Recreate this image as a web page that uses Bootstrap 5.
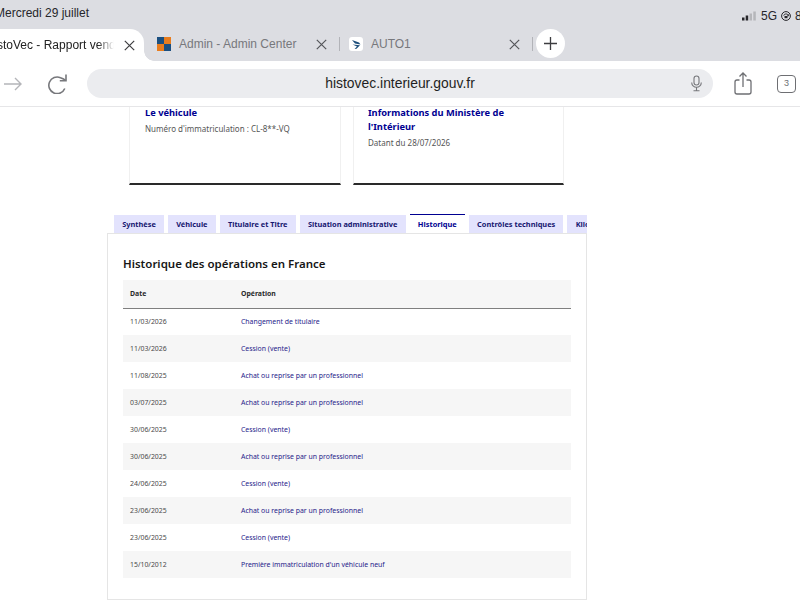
<!DOCTYPE html>
<html lang="fr">
<head>
  <meta charset="UTF-8">
  <meta name="viewport" content="width=device-width, initial-scale=1.0">
  <title>HistoVec</title>
  <link rel="stylesheet" href="https://cdn.jsdelivr.net/npm/bootstrap@5.3.0/dist/css/bootstrap.min.css">
  <style>
    html, body { width: 800px; height: 600px; overflow: hidden; }
    body { font-family: "Noto Sans", "Open Sans", sans-serif; background: #fff; color: #3a3a3a; }

    /* browser chrome */
    .chrome { background: #dcdde2; font-family: "Liberation Sans", Arial, sans-serif; }
    .status-bar { height: 27px; padding: 5px 0 0 0; font-size: 12px; line-height: 16px; color: #26262a; }
    .status-date { margin-left: -5px; }
    .status-right { width: 58px; gap: 4px; font-size: 12px; white-space: nowrap; flex: none; }
    .status-right svg { flex: none; }
    .tab-strip { height: 34px; overflow: hidden; }
    .tab-on { width: 144px; height: 32px; margin-top: 2px; flex: none; background: #fff; border-radius: 0 14px 0 0; font-size: 12px; color: #222; padding-right: 9px; position: relative; }
    .tab-on::after { content: ""; position: absolute; left: 100%; bottom: 0; width: 10px; height: 10px; background: radial-gradient(circle at 100% 0, transparent 9.5px, #fff 10px); }
    .tab-on .tab-label { width: 117px; margin-left: -3px; white-space: nowrap; overflow: hidden; -webkit-mask-image: linear-gradient(90deg, #000 86%, transparent); mask-image: linear-gradient(90deg, #000 86%, transparent); }
    .tab-off { height: 32px; font-size: 12px; color: #77787c; flex: none; }
    .tab-one { width: 195px; padding: 0 12px 0 13px; }
    .tab-two { width: 192px; padding: 0 12px 0 9px; }
    .tab-sep { width: 1px; height: 14px; background: #b2b3b8; flex: none; }
    .plus-btn { width: 29px; height: 29px; border-radius: 50%; background: #fff; flex: none; margin-left: 3px; margin-top: -2px; }
    .toolbar { height: 46px; background: #fff; border-bottom: 1px solid #e6e6e8; }
    .back-arrow { margin: 0 26px 0 4px; flex: none; }
    .url-field { width: 626px; height: 29px; margin: 0 21px 0 20px; border-radius: 15px; background: #ebecef; font-size: 13.9px; color: #1f1f22; flex: none; position: relative; }
    .mic-icon { position: absolute; right: 11px; top: 6px; }
    .tabs-count { width: 19px; height: 18px; margin-left: 25px; border: 1.3px solid #6e6f73; border-radius: 4px; font-size: 9px; color: #6e6f73; flex: none; }

    /* page */
    .cards-row { padding-left: 129px; gap: 12px; height: 78px; }
    .veh-card { width: 212px; height: 78px; border: 1px solid #f0f0f0; border-top: 0; border-bottom: 2px solid #2a2a2a; padding-left: 15px; flex: none; }
    .veh-card + .veh-card { width: 211px; padding: 0 30px 0 14px; }
    .veh-title { font-size: 9.3px; line-height: 14px; font-weight: 700; color: #000091; margin: -1px 0 2px; }
    .veh-sub { font-size: 8px; line-height: 14px; color: #555; margin: 0; }
    .tab-row { margin: 29px 0 0 114px; width: 473px; height: 19px; gap: 4px; overflow: hidden; }
    .hv-tab { height: 18px; margin-top: 1px; padding: 0 8.2px; background: #e3e3fd; color: #161670; font-size: 7.4px; line-height: 18px; font-weight: 700; white-space: nowrap; flex: none; }
    .hv-tab-on { height: 19px; margin-top: 0; background: #fff; border-top: 1px solid #000091; color: #000091; }
    .panel { width: 480px; height: 367px; margin-left: 107px; border: 1px solid #e5e5e5; padding: 21px 15px 0; }
    .panel h2 { font-size: 11.5px; line-height: 18px; font-weight: 600; color: #161616; margin: 0 0 7px; }
    .hv-table { width: 448px; table-layout: fixed; margin: 0; font-size: 6.9px; color: #4a4a4a; }
    .hv-table th, .hv-table td { height: 27px; padding: 1px 7px 0; vertical-align: middle; border: 0; background: transparent; }
    .hv-table thead th { height: 28px; background: #f6f6f6; border-bottom: 1px solid #7f7f7f; font-weight: 700; color: #2a2a2a; }
    .hv-table td:first-child, .hv-table th:first-child { width: 111px; }
    .hv-table tbody tr:nth-child(even) td { background: #f6f6f6; }
    .hv-table a { color: #26228a; text-decoration: none; }
  </style>
</head>
<body>
  <div class="chrome">
    <div class="status-bar d-flex justify-content-between">
      <span class="status-date">Mercredi 29 juillet</span>
      <span class="status-right d-flex align-items-center">
        <svg width="14" height="10" viewBox="0 0 14 10"><rect x="0" y="6.500" width="2.500" height="3" fill="#26262a"/><rect x="3.700" y="4.500" width="2.500" height="5" fill="#26262a"/><rect x="7.500" y="2.500" width="2.500" height="7" fill="#b5b6ba"/><rect x="11.300" y="0.500" width="2.500" height="9" fill="#b5b6ba"/></svg>
        <span style="margin-left:1px">5G</span>
        <svg width="10" height="10" viewBox="0 0 10 10" fill="none" stroke="#26262a"><circle cx="5" cy="5" r="4.400" stroke-width="1"/><path d="M2.700 4.700A2.400 2.400 0 0 1 7.300 4.500M7.700 3.200v1.600H6.100" stroke-width=".9"/><rect x="3.500" y="5" width="3" height="2.200" fill="#26262a" stroke="none"/></svg>
        <span>8</span>
      </span>
    </div>
    <div class="tab-strip d-flex align-items-center">
      <div class="tab-on d-flex align-items-center justify-content-between">
        <span class="tab-label">stoVec - Rapport vendeur</span>
        <svg width="11" height="11" viewBox="0 0 11 11" stroke="#3d3d40" stroke-width="1.200"><path d="M.8.8l9.4 9.4M10.200.8.8 10.200"/></svg>
      </div>
      <div class="tab-off tab-one d-flex align-items-center">
        <svg class="me-2" width="14" height="14" viewBox="0 0 14 14"><rect width="7" height="7" fill="#1b4f80"/><rect x="7" width="7" height="7" fill="#e87c1e"/><rect y="7" width="7" height="7" fill="#e87c1e"/><rect x="7" y="7" width="7" height="7" fill="#1b4f80"/></svg>
        <span class="flex-grow-1">Admin - Admin Center</span>
        <svg width="11" height="11" viewBox="0 0 11 11" stroke="#55565a" stroke-width="1.200"><path d="M.8.8l9.4 9.400M10.200.8.8 10.200"/></svg>
      </div>
      <span class="tab-sep"></span>
      <div class="tab-two tab-off d-flex align-items-center">
        <svg class="me-2" width="14" height="14" viewBox="0 0 14 14"><rect width="14" height="14" rx="3" fill="#fff"/><path d="M3 3l7 2.500 1.500 2L6 6.500zM3.500 7.500l7.500.800-3.500 3.500-2 .2 2.500-2.500z" fill="#1d4f7c"/></svg>
        <span class="flex-grow-1">AUTO1</span>
        <svg width="11" height="11" viewBox="0 0 11 11" stroke="#55565a" stroke-width="1.200"><path d="M.8.8l9.400 9.400M10.200.8.8 10.200"/></svg>
      </div>
      <span class="tab-sep"></span>
      <span class="plus-btn d-flex align-items-center justify-content-center">
        <svg width="13" height="13" viewBox="0 0 13 13" stroke="#3d3d40" stroke-width="1.300"><path d="M6.500 0v13M0 6.500h13"/></svg>
      </span>
    </div>
    <div class="toolbar d-flex align-items-center">
      <svg class="back-arrow" width="18" height="14" viewBox="0 0 18 14" fill="none" stroke="#b4b5b9" stroke-width="1.400"><path d="M0 7h17M11 1l6 6-6 6"/></svg>
      <svg width="19" height="20" viewBox="0 0 19 20" fill="none" stroke="#77787c" stroke-width="1.600"><path d="M16.800 14.500A8.300 8.300 0 1 1 12.500 3.700C14.500 4.400 16 5 17.800 6.500"/><path d="M18 .5V6.800H11.800"/></svg>
      <div class="url-field d-flex align-items-center justify-content-center">
        <span>histovec.interieur.gouv.fr</span>
        <svg class="mic-icon" width="11" height="17" viewBox="0 0 11 17" fill="none" stroke="#77787c" stroke-width="1.100"><rect x="3" y="1" width="5" height="9" rx="2.500"/><path d="M.7 7.500a4.800 4.800 0 0 0 9.600 0M5.500 12.500v3M2.500 15.800h6"/></svg>
      </div>
      <svg width="18" height="23" viewBox="0 0 18 23" fill="none" stroke="#6e6f73" stroke-width="1.300"><path d="M5.500 8H3a2 2 0 0 0-2 2v10a2 2 0 0 0 2 2h12a2 2 0 0 0 2-2V10a2 2 0 0 0-2-2h-2.500M9 15V1M5.500 4.500 9 1l3.500 3.500"/></svg>
      <span class="tabs-count d-flex align-items-center justify-content-center">3</span>
    </div>
  </div>

  <div class="cards-row d-flex">
    <div class="veh-card">
      <p class="veh-title">Le véhicule</p>
      <p class="veh-sub">Numéro d'immatriculation : CL-8**-VQ</p>
    </div>
    <div class="veh-card">
      <p class="veh-title">Informations du Ministère de l'Intérieur</p>
      <p class="veh-sub">Datant du 28/07/2026</p>
    </div>
  </div>

  <div class="tab-row d-flex">
    <span class="hv-tab">Synthèse</span>
    <span class="hv-tab">Véhicule</span>
    <span class="hv-tab">Titulaire et Titre</span>
    <span class="hv-tab">Situation administrative</span>
    <span class="hv-tab hv-tab-on">Historique</span>
    <span class="hv-tab">Contrôles techniques</span>
    <span class="hv-tab">Kilométrage</span>
  </div>

  <div class="panel">
    <h2>Historique des opérations en France</h2>
    <table class="table hv-table">
      <thead><tr><th>Date</th><th>Opération</th></tr></thead>
      <tbody>
        <tr><td>11/03/2026</td><td><a href="#">Changement de titulaire</a></td></tr>
        <tr><td>11/03/2026</td><td><a href="#">Cession (vente)</a></td></tr>
        <tr><td>11/08/2025</td><td><a href="#">Achat ou reprise par un professionnel</a></td></tr>
        <tr><td>03/07/2025</td><td><a href="#">Achat ou reprise par un professionnel</a></td></tr>
        <tr><td>30/06/2025</td><td><a href="#">Cession (vente)</a></td></tr>
        <tr><td>30/06/2025</td><td><a href="#">Achat ou reprise par un professionnel</a></td></tr>
        <tr><td>24/06/2025</td><td><a href="#">Cession (vente)</a></td></tr>
        <tr><td>23/06/2025</td><td><a href="#">Achat ou reprise par un professionnel</a></td></tr>
        <tr><td>23/06/2025</td><td><a href="#">Cession (vente)</a></td></tr>
        <tr><td>15/10/2012</td><td><a href="#">Première immatriculation d'un véhicule neuf</a></td></tr>
      </tbody>
    </table>
  </div>
  <script src="https://cdn.jsdelivr.net/npm/bootstrap@5.3.0/dist/js/bootstrap.bundle.min.js"></script>
</body>
</html>
